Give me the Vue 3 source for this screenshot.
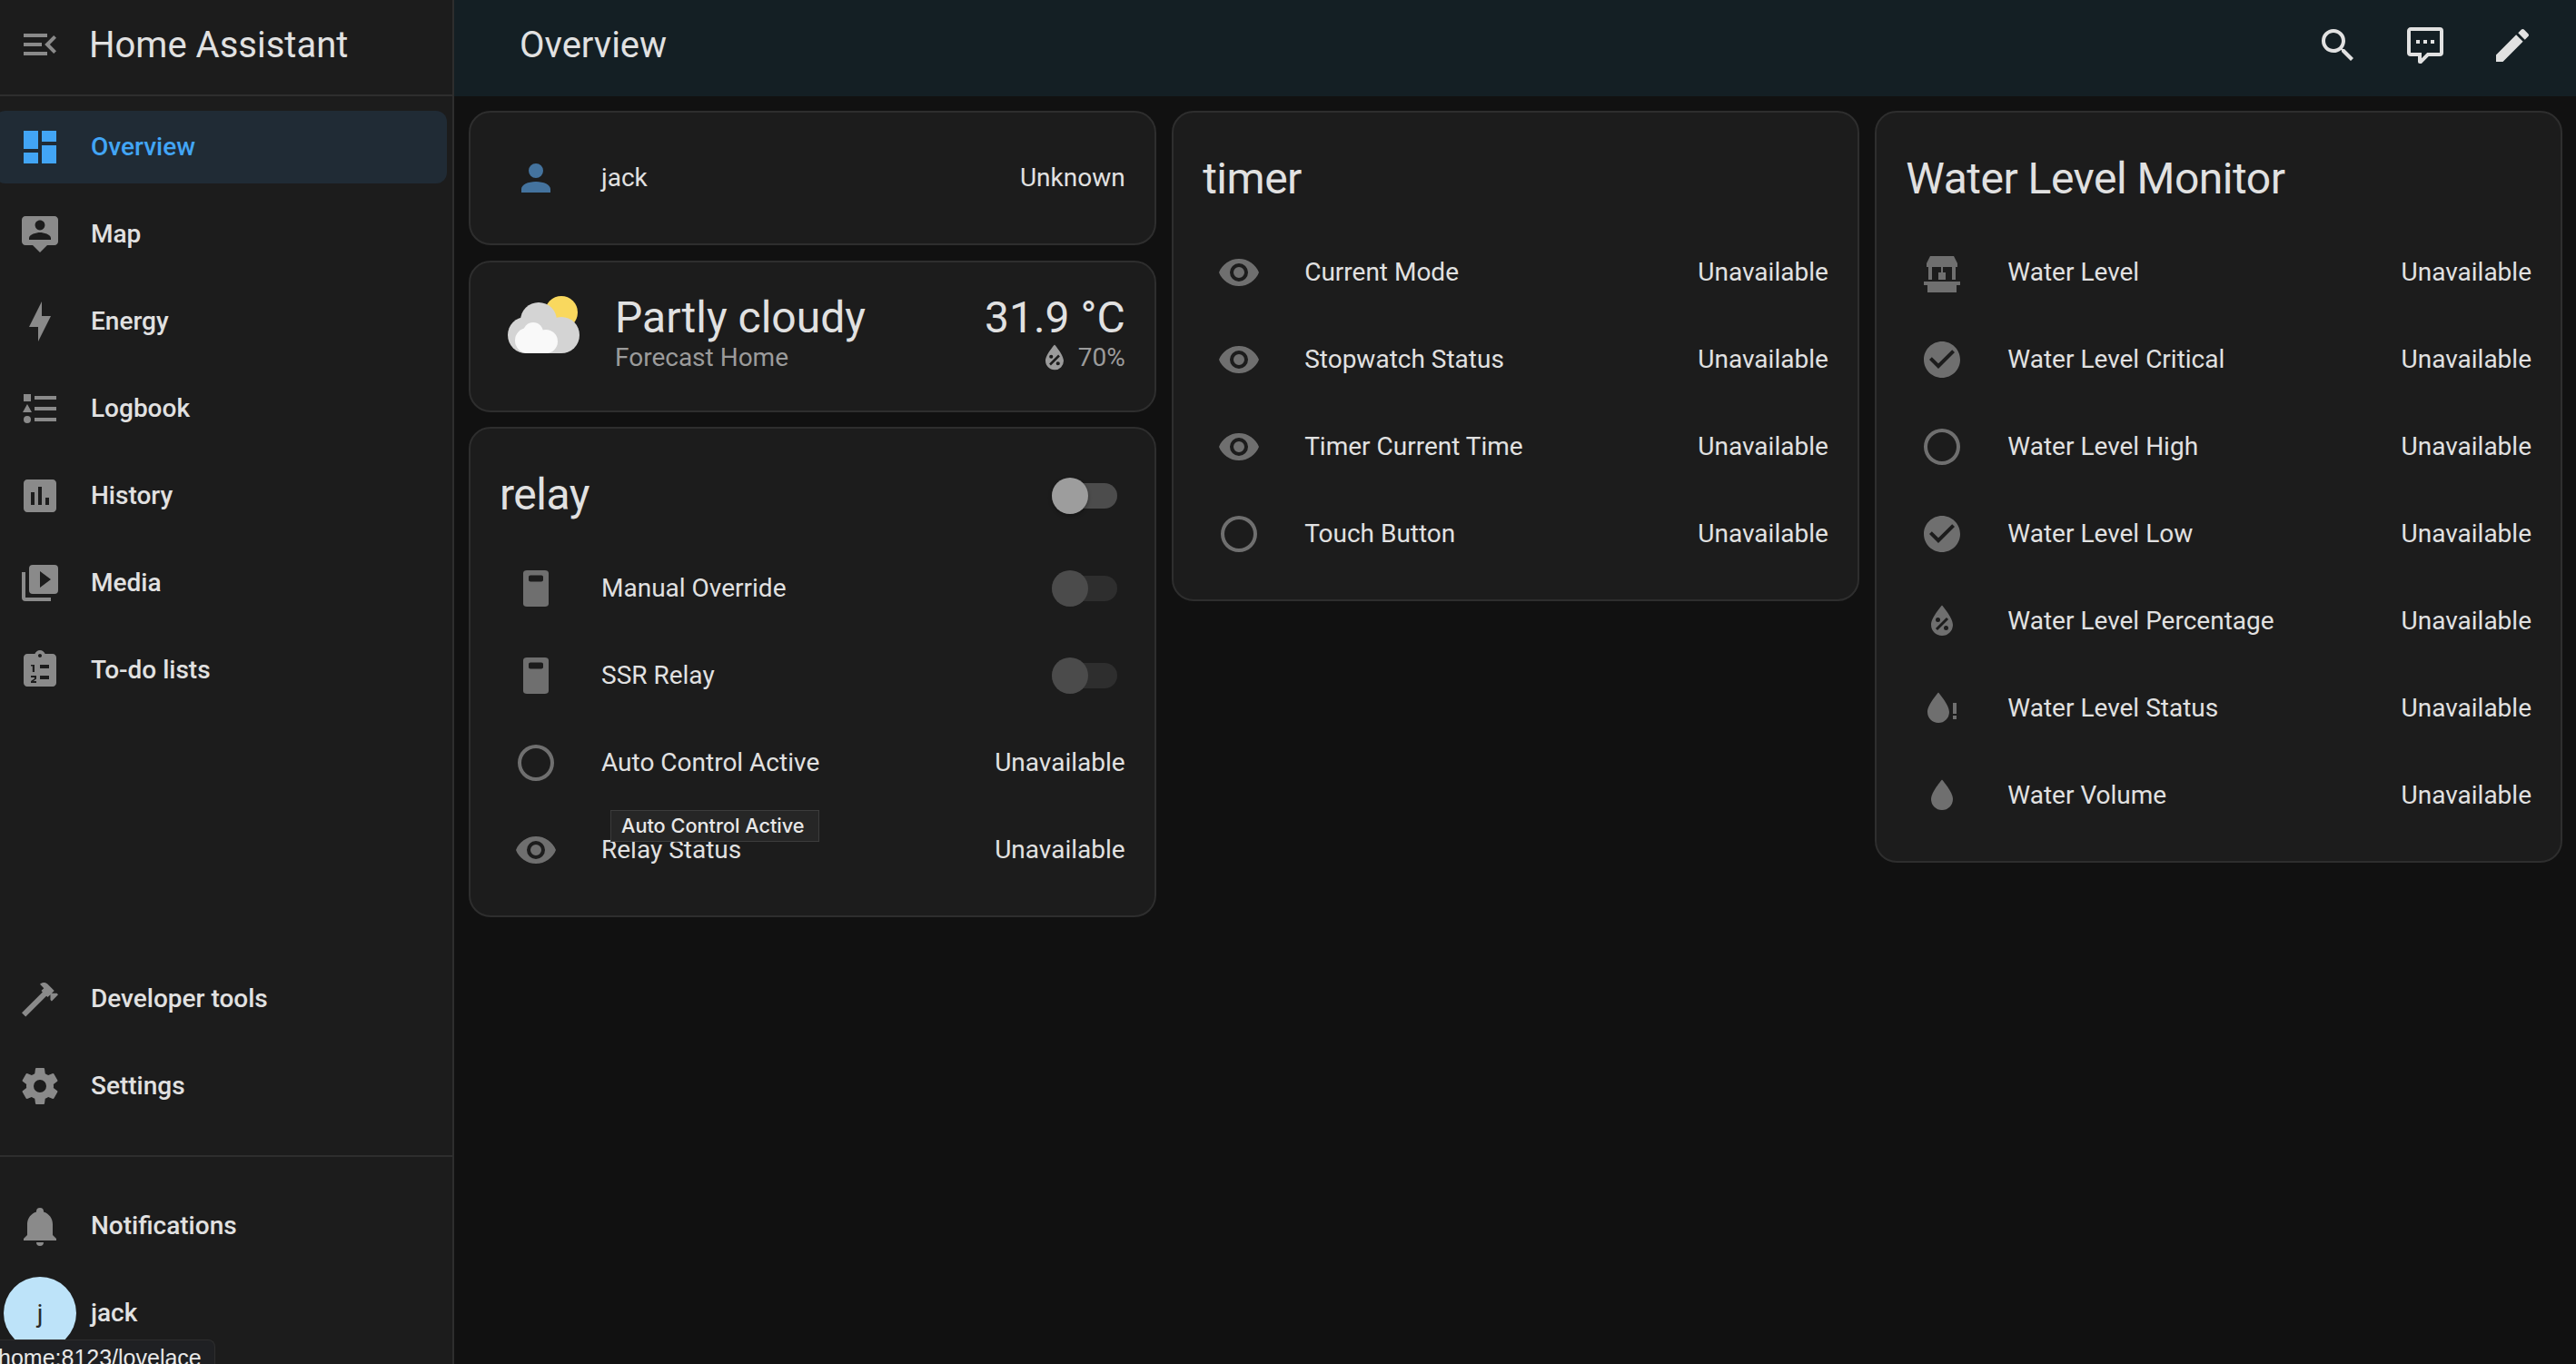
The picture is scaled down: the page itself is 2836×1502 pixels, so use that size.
<script setup>
const mdi = {
  menuOpen: 'M21,15.61L19.59,17L14.58,12L19.59,7L21,8.39L17.44,12L21,15.61M3,6H16V8H3V6M3,13V11H13V13H3M3,18V16H16V18H3Z',
  dashboard: 'M13,3V9H21V3M13,21H21V11H13M3,21H11V15H3M3,13H11V3H3V13Z',
  map: 'M20 2H4C2.9 2 2 2.9 2 4V16C2 17.1 2.9 18 4 18H8L12 22L16 18H20C21.1 18 22 17.1 22 16V4C22 2.9 21.1 2 20 2M12 4.3C13.5 4.3 14.7 5.5 14.7 7S13.5 9.7 12 9.7 9.3 8.5 9.3 7 10.5 4.3 12 4.3M18 15H6V14.1C6 12.1 10 11 12 11S18 12.1 18 14.1V15Z',
  bolt: 'M11 15H6L13 1V9H18L11 23V15Z',
  logbook: 'M5,9.5L7.5,14H2.5L5,9.5M3,4H7V8H3V4M5,20A2,2 0 0,0 7,18A2,2 0 0,0 5,16A2,2 0 0,0 3,18A2,2 0 0,0 5,20M9,5V7H21V5H9M9,19H21V17H9V19M9,13H21V11H9V13Z',
  chart: 'M19 3H5C3.9 3 3 3.9 3 5V19C3 20.1 3.9 21 5 21H19C20.1 21 21 20.1 21 19V5C21 3.9 20.1 3 19 3M9 17H7V10H9V17M13 17H11V7H13V17M17 17H15V13H17V17Z',
  media: 'M4,6H2V20A2,2 0 0,0 4,22H18V20H4V6M20,2H8A2,2 0 0,0 6,4V16A2,2 0 0,0 8,18H20A2,2 0 0,0 22,16V4A2,2 0 0,0 20,2M12,14.5V5.5L18,10L12,14.5Z',
  todo: 'M19 3H14.82C14.4 1.84 13.3 1 12 1S9.6 1.84 9.18 3H5C3.9 3 3 3.9 3 5V19C3 20.1 3.9 21 5 21H19C20.1 21 21 20.1 21 19V5C21 3.9 20.1 3 19 3M12 3C12.55 3 13 3.45 13 4S12.55 5 12 5 11 4.55 11 4 11.45 3 12 3M12 9V11H17V9H12M12 15V17H17V15H12M7 9V9.8H7.9V13H9V9H7M7 15V16H9V16.6L7 18V19H10V18H8.4L10 16.8V15H7Z',
  hammer: 'M2 19.63L13.43 8.2L12.72 7.5L14.14 6.07L12 3.89C13.2 2.7 15.09 2.7 16.27 3.89L19.87 7.5L18.45 8.91H21.29L22 9.62L18.45 13.21L17.74 12.5V9.62L16.27 11.04L15.56 10.33L4.13 21.76L2 19.63Z',
  cog: 'M12,15.5A3.5,3.5 0 0,1 8.5,12A3.5,3.5 0 0,1 12,8.5A3.5,3.5 0 0,1 15.5,12A3.5,3.5 0 0,1 12,15.5M19.43,12.97C19.47,12.65 19.5,12.33 19.5,12C19.5,11.67 19.47,11.34 19.43,11L21.54,9.37C21.73,9.22 21.78,8.95 21.66,8.73L19.66,5.27C19.54,5.05 19.27,4.96 19.05,5.05L16.56,6.05C16.04,5.66 15.5,5.32 14.87,5.07L14.5,2.42C14.46,2.18 14.25,2 14,2H10C9.75,2 9.54,2.18 9.5,2.42L9.13,5.07C8.5,5.32 7.96,5.66 7.44,6.05L4.95,5.05C4.73,4.96 4.46,5.05 4.34,5.27L2.34,8.73C2.21,8.95 2.27,9.22 2.46,9.37L4.57,11C4.53,11.34 4.5,11.67 4.5,12C4.5,12.33 4.53,12.65 4.57,12.97L2.46,14.63C2.27,14.78 2.21,15.05 2.34,15.27L4.34,18.73C4.46,18.95 4.73,19.03 4.95,18.95L7.44,17.94C7.96,18.34 8.5,18.68 9.13,18.93L9.5,21.58C9.54,21.82 9.75,22 10,22H14C14.25,22 14.46,21.82 14.5,21.58L14.87,18.93C15.5,18.67 16.04,18.34 16.56,17.94L19.05,18.95C19.27,19.03 19.54,18.95 19.66,18.73L21.66,15.27C21.78,15.05 21.73,14.78 21.54,14.63L19.43,12.97Z',
  bell: 'M21,19V20H3V19L5,17V11C5,7.9 7.03,5.17 10,4.29C10,4.19 10,4.1 10,4A2,2 0 0,1 12,2A2,2 0 0,1 14,4C14,4.1 14,4.19 14,4.29C16.97,5.17 19,7.9 19,11V17L21,19M14,21A2,2 0 0,1 12,23A2,2 0 0,1 10,21',
  search: 'M9.5,3A6.5,6.5 0 0,1 16,9.5C16,11.11 15.41,12.59 14.44,13.73L14.71,14H15.5L20.5,19L19,20.5L14,15.5V14.71L13.73,14.44C12.59,15.41 11.11,16 9.5,16A6.5,6.5 0 0,1 3,9.5A6.5,6.5 0 0,1 9.5,3M9.5,5C7,5 5,7 5,9.5C5,12 7,14 9.5,14C12,14 14,12 14,9.5C14,7 12,5 9.5,5Z',
  comment: 'M9,22A1,1 0 0,1 8,21V18H4A2,2 0 0,1 2,16V4C2,2.89 2.9,2 4,2H20A2,2 0 0,1 22,4V16A2,2 0 0,1 20,18H13.9L10.2,21.71C10,21.9 9.75,22 9.5,22V22H9M10,16V19.08L13.08,16H20V4H4V16H10M17,11H15V9H17V11M13,11H11V9H13V11M9,11H7V9H9V11Z',
  pencil: 'M20.71,7.04C21.1,6.65 21.1,6 20.71,5.63L18.37,3.29C18,2.9 17.35,2.9 16.96,3.29L15.12,5.12L18.87,8.87M3,17.25V21H6.75L17.81,9.93L14.06,6.18L3,17.25Z',
  account: 'M12,4A4,4 0 0,1 16,8A4,4 0 0,1 12,12A4,4 0 0,1 8,8A4,4 0 0,1 12,4M12,14C16.42,14 20,15.79 20,18V20H4V18C4,15.79 7.58,14 12,14Z',
  eye: 'M12,9A3,3 0 0,0 9,12A3,3 0 0,0 12,15A3,3 0 0,0 15,12A3,3 0 0,0 12,9M12,17A5,5 0 0,1 7,12A5,5 0 0,1 12,7A5,5 0 0,1 17,12A5,5 0 0,1 12,17M12,4.5C7,4.5 2.73,7.61 1,12C2.73,16.39 7,19.5 12,19.5C17,19.5 21.27,16.39 23,12C21.27,7.61 17,4.5 12,4.5Z',
  circle: 'M12,20A8,8 0 0,1 4,12A8,8 0 0,1 12,4A8,8 0 0,1 20,12A8,8 0 0,1 12,20M12,2A10,10 0 0,0 2,12A10,10 0 0,0 12,22A10,10 0 0,0 22,12A10,10 0 0,0 12,2Z',
  check: 'M12 2C6.5 2 2 6.5 2 12S6.5 22 12 22 22 17.5 22 12 17.5 2 12 2M10 17L5 12L6.41 10.59L10 14.17L17.59 6.58L19 8L10 17Z',
  relay: 'M7 2H17C18.1 2 19 2.6 19 3.5V20.5C19 21.4 18.1 22 17 22H7C5.9 22 5 21.4 5 20.5V3.5C5 2.6 5.9 2 7 2M9 4.7C8.4 4.7 8 5.1 8 5.7V7.3C8 7.9 8.4 8.3 9 8.3H15C15.6 8.3 16 7.9 16 7.3V5.7C16 5.1 15.6 4.7 15 4.7H9Z',
  well: 'M5.5 3H18.5L20.5 7V9H3.5V7L5.5 3M4.5 9H6.5V16H4.5V9M17.5 9H19.5V16H17.5V9M11.5 9H12.5V12H14V16H10V12H11.5V9M2 17H22V19H20V23H4V19H2V17Z',
  percent: 'M12,3.25C12,3.25 6,10 6,14C6,17.32 8.69,20 12,20A6,6 0 0,0 18,14C18,10 12,3.25 12,3.25M14.47,9.97L15.53,11.03L9.53,17.03L8.47,15.97M9.75,10A1.25,1.25 0 0,1 11,11.25A1.25,1.25 0 0,1 9.75,12.5A1.25,1.25 0 0,1 8.5,11.25A1.25,1.25 0 0,1 9.75,10M14.25,14.5A1.25,1.25 0 0,1 15.5,15.75A1.25,1.25 0 0,1 14.25,17A1.25,1.25 0 0,1 13,15.75A1.25,1.25 0 0,1 14.25,14.5Z',
  water: 'M12,20A6,6 0 0,1 6,14C6,10 12,3.25 12,3.25C12,3.25 18,10 18,14A6,6 0 0,1 12,20Z',
  waterAlert: 'M10 3.25C10 3.25 4 10 4 14C4 17.32 6.69 20 10 20A6 6 0 0 0 16 14C16 10 10 3.25 10 3.25M18 9V15H20V9H18M18 16V18H20V16H18Z',
}

const navMain = [
  { label: 'Overview', icon: mdi.dashboard, active: true },
  { label: 'Map', icon: mdi.map },
  { label: 'Energy', icon: mdi.bolt },
  { label: 'Logbook', icon: mdi.logbook },
  { label: 'History', icon: mdi.chart },
  { label: 'Media', icon: mdi.media },
  { label: 'To-do lists', icon: mdi.todo },
]
const navTools = [
  { label: 'Developer tools', icon: mdi.hammer },
  { label: 'Settings', icon: mdi.cog },
]

const relayRows = [
  { name: 'Manual Override', icon: mdi.relay, toggle: true },
  { name: 'SSR Relay', icon: mdi.relay, toggle: true },
  { name: 'Auto Control Active', icon: mdi.circle },
  { name: 'Relay Status', icon: mdi.eye },
]
const timerRows = [
  { name: 'Current Mode', icon: mdi.eye },
  { name: 'Stopwatch Status', icon: mdi.eye },
  { name: 'Timer Current Time', icon: mdi.eye },
  { name: 'Touch Button', icon: mdi.circle },
]
const waterRows = [
  { name: 'Water Level', icon: mdi.well },
  { name: 'Water Level Critical', icon: mdi.check },
  { name: 'Water Level High', icon: mdi.circle },
  { name: 'Water Level Low', icon: mdi.check },
  { name: 'Water Level Percentage', icon: mdi.percent },
  { name: 'Water Level Status', icon: mdi.waterAlert },
  { name: 'Water Volume', icon: mdi.water },
]
</script>

<template>
  <div class="app">
    <aside class="sidebar">
      <div class="side-head">
        <svg class="ico side-menu" viewBox="0 0 24 24"><path :d="mdi.menuOpen" /></svg>
        <span class="side-title">Home Assistant</span>
      </div>
      <nav class="nav nav-main">
        <a v-for="item in navMain" :key="item.label" class="nav-item" :class="{ active: item.active }">
          <svg class="ico" viewBox="0 0 24 24"><path :d="item.icon" /></svg>
          <span class="nav-label">{{ item.label }}</span>
        </a>
      </nav>
      <nav class="nav nav-tools">
        <a v-for="item in navTools" :key="item.label" class="nav-item">
          <svg class="ico" viewBox="0 0 24 24"><path :d="item.icon" /></svg>
          <span class="nav-label">{{ item.label }}</span>
        </a>
      </nav>
      <div class="side-divider" />
      <nav class="nav nav-user">
        <a class="nav-item">
          <svg class="ico" viewBox="0 0 24 24"><path :d="mdi.bell" /></svg>
          <span class="nav-label">Notifications</span>
        </a>
        <a class="nav-item">
          <span class="avatar-slot"><span class="avatar">j</span></span>
          <span class="nav-label">jack</span>
        </a>
      </nav>
    </aside>

    <div class="main">
      <header class="topbar">
        <span class="top-title">Overview</span>
        <div class="top-actions">
          <button class="top-btn"><svg class="ico" viewBox="0 0 24 24"><path :d="mdi.search" /></svg></button>
          <button class="top-btn"><svg class="ico" viewBox="0 0 24 24"><path :d="mdi.comment" /></svg></button>
          <button class="top-btn"><svg class="ico" viewBox="0 0 24 24"><path :d="mdi.pencil" /></svg></button>
        </div>
      </header>

      <div class="columns">
        <div class="col">
          <section class="card card-person">
            <div class="row">
              <span class="badge"><svg class="ico person" viewBox="0 0 24 24"><path :d="mdi.account" /></svg></span>
              <span class="name">jack</span>
              <span class="state">Unknown</span>
            </div>
          </section>

          <section class="card card-weather">
            <svg class="weather-art" viewBox="0 0 84 70" width="84" height="70">
              <circle cx="61" cy="22" r="18" fill="#f9d85e" />
              <g fill="#d4d4d4">
                <circle cx="36" cy="31" r="20" />
                <circle cx="22" cy="47" r="20" />
                <circle cx="61" cy="47" r="20" />
                <rect x="22" y="40" width="39" height="27" />
              </g>
              <g fill="#f9f9f9">
                <circle cx="30" cy="44" r="11" />
                <circle cx="24" cy="53" r="14" />
                <circle cx="44" cy="54" r="13" />
                <rect x="24" y="50" width="20" height="17" />
              </g>
            </svg>
            <div class="weather-info">
              <div class="weather-state">Partly cloudy</div>
              <div class="weather-sub">Forecast Home</div>
            </div>
            <div class="weather-right">
              <div class="weather-temp">31.9 °C</div>
              <div class="weather-attr">
                <svg class="ico attr-ico" viewBox="0 0 24 24"><path :d="mdi.percent" /></svg>
                <span>70%</span>
              </div>
            </div>
          </section>

          <section class="card card-relay">
            <div class="card-head">
              <h2>relay</h2>
              <span class="switch on-head"><span class="thumb" /></span>
            </div>
            <div class="rows">
              <div v-for="row in relayRows" :key="row.name" class="row">
                <span class="badge"><svg class="ico dim" viewBox="0 0 24 24"><path :d="row.icon" /></svg></span>
                <span class="name">{{ row.name }}</span>
                <span v-if="row.toggle" class="switch"><span class="thumb" /></span>
                <span v-else class="state">Unavailable</span>
              </div>
            </div>
            <div class="tooltip">Auto Control Active</div>
          </section>
        </div>

        <div class="col">
          <section class="card">
            <div class="card-head"><h2>timer</h2></div>
            <div class="rows">
              <div v-for="row in timerRows" :key="row.name" class="row">
                <span class="badge"><svg class="ico dim" viewBox="0 0 24 24"><path :d="row.icon" /></svg></span>
                <span class="name">{{ row.name }}</span>
                <span class="state">Unavailable</span>
              </div>
            </div>
          </section>
        </div>

        <div class="col">
          <section class="card">
            <div class="card-head"><h2>Water Level Monitor</h2></div>
            <div class="rows">
              <div v-for="row in waterRows" :key="row.name" class="row">
                <span class="badge"><svg class="ico dim" viewBox="0 0 24 24"><path :d="row.icon" /></svg></span>
                <span class="name">{{ row.name }}</span>
                <span class="state">Unavailable</span>
              </div>
            </div>
          </section>
        </div>
      </div>
    </div>

    <div class="url-bubble">home:8123/lovelace</div>
  </div>
</template>

<style>
html, body {
  margin: 0;
  background: #111111;
}
</style>

<style scoped>
.app {
  position: relative;
  display: flex;
  width: 100%;
  height: 1502px;
  overflow: hidden;
  background: #111111;
  color: #e1e1e1;
  font-family: Roboto, "Liberation Sans", sans-serif;
  font-size: 28px;
}

.ico {
  flex: 0 0 48px;
  width: 48px;
  height: 48px;
  fill: currentColor;
  fill-rule: evenodd;
}

/* sidebar */
.sidebar {
  display: flex;
  flex-direction: column;
  flex: 0 0 500px;
  box-sizing: border-box;
  border-right: 2px solid #2e2e2e;
  background: #1c1c1c;
}
.side-head {
  display: flex;
  align-items: center;
  height: 104px;
  padding: 0 0 6px 20px;
  box-sizing: border-box;
  gap: 30px;
}
.side-menu { color: #8a8a8a; }
.side-title {
  font-size: 40px;
  color: #e1e1e1;
}
.nav {
  display: flex;
  flex-direction: column;
  gap: 16px;
}
.nav-main {
  flex: 1;
  border-top: 2px solid #2e2e2e;
  padding-top: 16px;
}
.nav-tools { padding-bottom: 36px; }
.nav-user { padding: 36px 0 16px; }
.nav-item {
  display: flex;
  align-items: center;
  gap: 32px;
  height: 80px;
  margin: 0 6px 0 -6px;
  padding-left: 26px;
  border-radius: 12px;
  font-weight: 500;
  color: #e1e1e1;
}
.nav-label { margin-top: -2px; }
.nav-item .ico { color: #8a8a8a; }
.nav-item.active {
  background: #202b35;
  color: #42a5f5;
}
.nav-item.active .ico { color: #42a5f5; }
.side-divider {
  height: 2px;
  background: #2e2e2e;
}
.avatar-slot {
  display: flex;
  justify-content: center;
  flex: 0 0 48px;
  min-width: 0;
}
.avatar {
  display: flex;
  flex: 0 0 80px;
  align-items: center;
  justify-content: center;
  height: 80px;
  border-radius: 50%;
  background: #bde3f9;
  color: #2a2a2a;
  font-weight: 400;
}

/* main */
.main {
  flex: 1;
  min-width: 0;
}
.topbar {
  display: flex;
  align-items: center;
  justify-content: space-between;
  height: 106px;
  padding: 0 22px 6px 72px;
  box-sizing: border-box;
  background: #141f24;
}
.top-title {
  margin-top: -2px;
  font-size: 40px;
}
.top-actions { display: flex; }
.top-btn {
  display: flex;
  align-items: center;
  justify-content: center;
  width: 96px;
  height: 96px;
  padding: 0;
  border: 0;
  background: none;
  color: #e1e1e1;
}
.columns {
  display: grid;
  grid-template-columns: repeat(3, 1fr);
  align-items: start;
  column-gap: 17.5px;
  padding: 16px 15px 0 16px;
}
.col {
  display: flex;
  flex-direction: column;
  gap: 16.5px;
}

/* cards */
.card {
  position: relative;
  box-sizing: border-box;
  padding-bottom: 32px;
  border: 2px solid #2e2e2e;
  border-radius: 24px;
  background: #1c1c1c;
}
.card-person { padding: 32px; }
.card-head {
  display: flex;
  align-items: center;
  justify-content: space-between;
  height: 136px;
  padding: 0 41px 0 32px;
  box-sizing: border-box;
}
.card-head h2 {
  margin: 8px 0 0;
  font-size: 48px;
  font-weight: 400;
  letter-spacing: -0.5px;
  color: #e1e1e1;
}
.rows {
  display: flex;
  flex-direction: column;
  gap: 16px;
  padding: 0 32px;
}
.row {
  display: flex;
  align-items: center;
  height: 80px;
}
.badge {
  display: flex;
  flex: 0 0 80px;
  align-items: center;
  justify-content: center;
}
.dim { color: #6f6f6f; }
.person { color: #44739e; }
.name {
  flex: 1;
  margin: -2px 0 0 32px;
  color: #e1e1e1;
}
.state {
  margin-top: -2px;
  color: #e1e1e1;
}

/* switch */
.switch {
  position: relative;
  display: block;
  flex: 0 0 72px;
  height: 28px;
  margin-right: 9px;
  border-radius: 14px;
  background: #2e2e2e;
}
.thumb {
  position: absolute;
  top: -6px;
  left: 0;
  width: 40px;
  height: 40px;
  border-radius: 50%;
  background: #4b4b4b;
}
.on-head {
  margin: 12px 0 0;
  background: #4c4c4c;
}
.on-head .thumb {
  background: #9d9d9d;
  box-shadow: 0 2px 4px rgba(0, 0, 0, 0.3);
}

/* weather */
.card-weather {
  display: flex;
  align-items: center;
  height: 167px;
  padding: 0 32px 0 39px;
}
.weather-art {
  flex: 0 0 84px;
  margin-bottom: 27px;
}
.weather-info {
  flex: 1;
  margin-left: 36px;
  padding-bottom: 5px;
}
.weather-state {
  font-size: 48px;
  line-height: 52px;
  color: #e1e1e1;
}
.weather-sub {
  line-height: 36px;
  color: #9b9b9b;
}
.weather-right {
  padding-bottom: 5px;
  text-align: right;
}
.weather-temp {
  font-size: 48px;
  line-height: 52px;
}
.weather-attr {
  display: flex;
  align-items: center;
  justify-content: flex-end;
  gap: 6px;
  height: 36px;
  color: #9b9b9b;
}
.attr-ico {
  flex: 0 0 40px;
  width: 40px;
  height: 40px;
}

/* hover tooltip and link preview */
.tooltip {
  position: absolute;
  top: 420px;
  left: 154px;
  box-sizing: border-box;
  width: 230px;
  height: 35px;
  padding: 0 11px;
  border: 1px solid #3c3c3c;
  background: #262626;
  font-family: Inter, "Liberation Sans", sans-serif;
  font-size: 21.7px;
  font-weight: 500;
  line-height: 33px;
  white-space: nowrap;
  color: #e8e8e8;
}
.url-bubble {
  position: absolute;
  left: 0;
  bottom: 0;
  box-sizing: border-box;
  width: 237px;
  height: 27px;
  padding-top: 5px;
  overflow: hidden;
  border-top: 1px solid #2e2e2e;
  border-right: 1px solid #2e2e2e;
  border-top-right-radius: 8px;
  background: #1f2023;
  font-family: "Liberation Sans", Arial, sans-serif;
  font-size: 25px;
  line-height: 28px;
  text-indent: -2px;
  white-space: nowrap;
  color: #e8e8e8;
}
</style>
